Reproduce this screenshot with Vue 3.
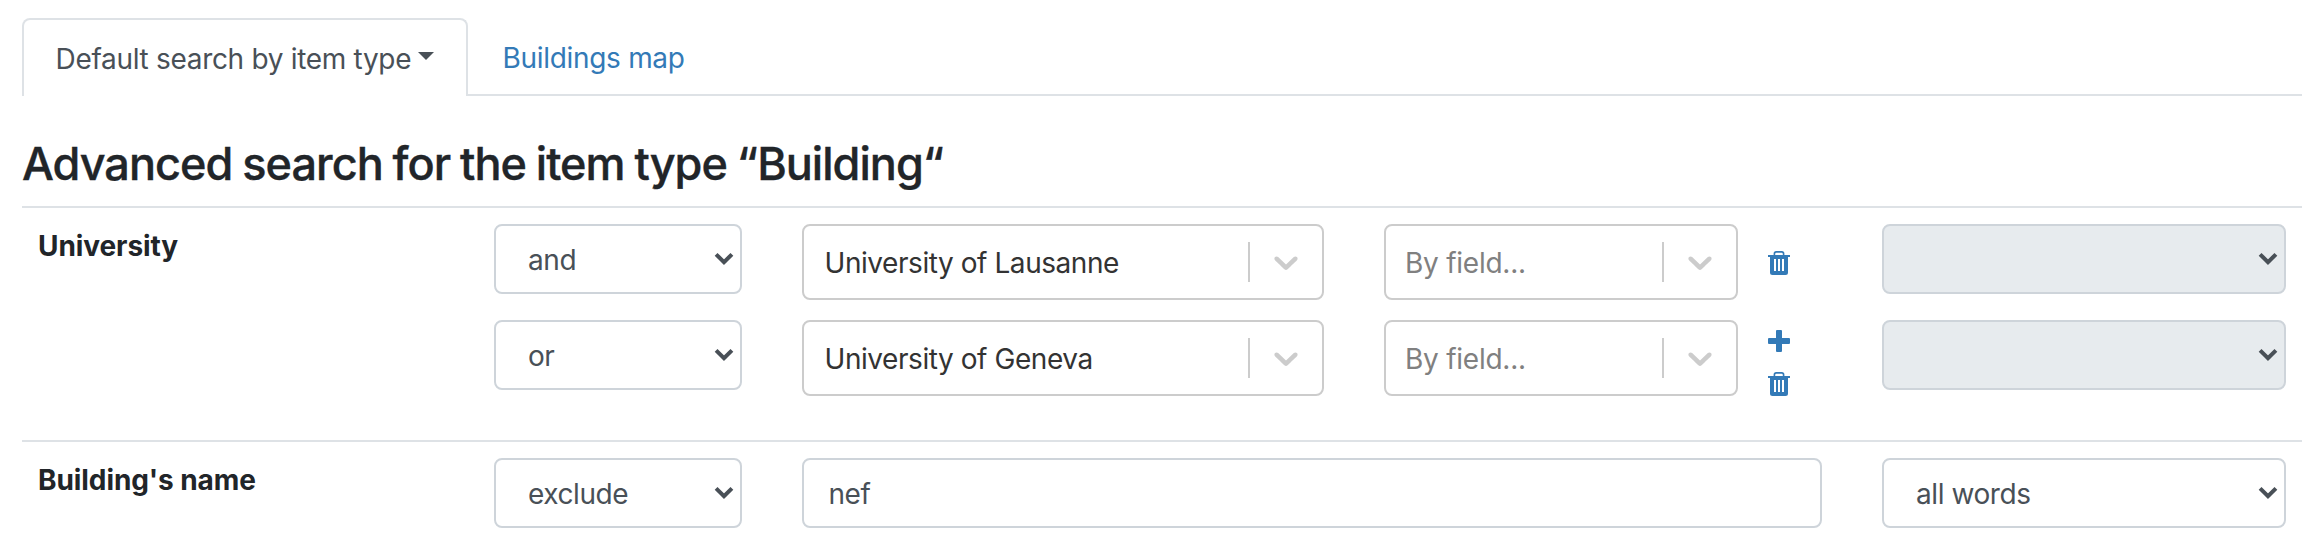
<script setup>
const entries = [
  { operator: 'and', value: 'University of Lausanne', placeholder: 'By field...', canAdd: false },
  { operator: 'or', value: 'University of Geneva', placeholder: 'By field...', canAdd: true },
]
</script>

<template>
  <main class="page">
    <nav class="tabs">
      <a class="tab active">Default search by item type<span class="caret"></span></a>
      <a class="tab link">Buildings map</a>
      <span class="rest"></span>
    </nav>

    <h2 class="title">Advanced search for the item type “Building“</h2>

    <section class="row university">
      <div class="label">University</div>
      <div class="entries">
        <div v-for="entry in entries" :key="entry.operator" class="entry">
          <div class="select">
            <span>{{ entry.operator }}</span>
            <svg class="arrow" viewBox="0 0 20 14" width="20" height="14"><path d="M2.1 2.3 10 10.1 17.9 2.3" /></svg>
          </div>
          <div class="pickers">
            <div class="combo">
              <span class="value">{{ entry.value }}</span>
              <span class="separator"></span>
              <svg class="chevron" viewBox="0 0 20 20"><path d="M4.516 7.548c0.436-0.446 1.043-0.481 1.576 0l3.908 3.747 3.908-3.747c0.533-0.481 1.141-0.446 1.574 0 0.436 0.445 0.408 1.197 0 1.615-0.406 0.418-4.695 4.502-4.695 4.502-0.217 0.223-0.502 0.335-0.787 0.335s-0.57-0.112-0.789-0.335c0 0-4.287-4.084-4.695-4.502s-0.436-1.17 0-1.615z" /></svg>
            </div>
            <div class="combo field">
              <span class="placeholder">{{ entry.placeholder }}</span>
              <span class="separator"></span>
              <svg class="chevron" viewBox="0 0 20 20"><path d="M4.516 7.548c0.436-0.446 1.043-0.481 1.576 0l3.908 3.747 3.908-3.747c0.533-0.481 1.141-0.446 1.574 0 0.436 0.445 0.408 1.197 0 1.615-0.406 0.418-4.695 4.502-4.695 4.502-0.217 0.223-0.502 0.335-0.787 0.335s-0.57-0.112-0.789-0.335c0 0-4.287-4.084-4.695-4.502s-0.436-1.17 0-1.615z" /></svg>
            </div>
            <div class="actions">
              <svg v-if="entry.canAdd" class="icon plus" viewBox="0 0 22 22" width="22" height="22">
                <path d="M9 0h4a1 1 0 0 1 1 1v7h7a1 1 0 0 1 1 1v4a1 1 0 0 1-1 1h-7v7a1 1 0 0 1-1 1H9a1 1 0 0 1-1-1v-7H1a1 1 0 0 1-1-1V9a1 1 0 0 1 1-1h7V1a1 1 0 0 1 1-1z" />
              </svg>
              <svg class="icon" viewBox="0 0 22 24" width="22" height="24">
                <path fill-rule="evenodd" d="M0 4h5.6V2.6A2.6 2.6 0 0 1 8.2 0h5.6a2.6 2.6 0 0 1 2.6 2.6V4H22v2h-2v15.5a2.5 2.5 0 0 1-2.5 2.5h-13A2.5 2.5 0 0 1 2 21.5V6H0zM7.2 4h7.6V3a1.2 1.2 0 0 0-1.2-1.2H8.4A1.2 1.2 0 0 0 7.2 3zM6 8v12h2V8zM10 8v12h2V8zM14 8v12h2V8z" />
              </svg>
            </div>
          </div>
          <div class="select disabled">
            <svg class="arrow" viewBox="0 0 20 14" width="20" height="14"><path d="M2.1 2.3 10 10.1 17.9 2.3" /></svg>
          </div>
        </div>
      </div>
    </section>

    <section class="row">
      <div class="label">Building's name</div>
      <div class="entries">
        <div class="entry">
          <div class="select">
            <span>exclude</span>
            <svg class="arrow" viewBox="0 0 20 14" width="20" height="14"><path d="M2.1 2.3 10 10.1 17.9 2.3" /></svg>
          </div>
          <div class="input">nef</div>
          <div class="select">
            <span>all words</span>
            <svg class="arrow" viewBox="0 0 20 14" width="20" height="14"><path d="M2.1 2.3 10 10.1 17.9 2.3" /></svg>
          </div>
        </div>
      </div>
    </section>
  </main>
</template>

<style>
body {
  background: #fff;
}
</style>

<style scoped>
.page,
.page * {
  box-sizing: border-box;
}
.page {
  width: 2320px;
  height: 560px;
  padding: 18px 18px 0 22px;
  font-family: Inter, 'Liberation Sans', sans-serif;
  font-size: 28px;
  color: #212529;
  overflow: hidden;
  white-space: nowrap;
}
.tabs {
  display: flex;
  height: 78px;
}
.tab {
  display: flex;
  align-items: center;
  letter-spacing: -0.31px;
}
.active {
  width: 446px;
  padding: 1px 0 0 31.5px;
  border: 2px solid #dee2e6;
  border-bottom: 0;
  border-radius: 8px 8px 0 0;
  color: #495057;
}
.caret {
  margin: -5px 0 0 6.5px;
  border: 8.5px solid transparent;
  border-top-color: currentColor;
  border-bottom: 0;
}
.link {
  width: 250px;
  padding: 4px 0 0 34.5px;
  border-bottom: 2px solid #dee2e6;
  color: #337ab7;
}
.rest {
  flex: 1;
  border-bottom: 2px solid #dee2e6;
}
.title {
  margin: 41px 0 15px;
  font-size: 45px;
  line-height: 54px;
  font-weight: 500;
  letter-spacing: -0.96px;
  word-spacing: -1.2px;
  -webkit-text-stroke: 0.4px currentColor;
}
.row {
  display: grid;
  grid-template-columns: 456px 1fr;
  padding: 16px 16px 0;
  border-top: 2px solid #dee2e6;
}
.university {
  padding-bottom: 44px;
}
.label {
  padding-top: 1px;
  font-weight: 700;
  line-height: 43px;
  letter-spacing: -0.08px;
}
.entries {
  display: grid;
  gap: 20px;
}
.entry {
  display: grid;
  grid-template-columns: 248px 1020px 404px;
  gap: 60px;
  align-items: start;
}
.select,
.input {
  display: flex;
  align-items: center;
  height: 70px;
  padding: 1px 6px 0 32px;
  border: 2px solid #ced4da;
  border-radius: 8px;
  background: #fff;
  color: #495057;
  letter-spacing: -0.42px;
}
.input {
  padding-left: 24.5px;
}
.select.disabled {
  background: #e7ebee;
}
.arrow {
  margin: -2px 0 0 auto;
  fill: none;
  stroke: #495057;
  stroke-width: 4;
}
.pickers {
  display: grid;
  grid-template-columns: 522px 354px 22px;
  column-gap: 60px;
}
.combo {
  display: flex;
  align-items: center;
  height: 76px;
  padding: 0 16px 0 20.5px;
  border: 2px solid #ccc;
  border-radius: 8px;
  background: #fff;
  color: #333;
  letter-spacing: -0.44px;
}
.field {
  padding-left: 19px;
}
.value,
.placeholder {
  padding-top: 2px;
}
.placeholder {
  color: #808080;
  letter-spacing: -0.25px;
}
.separator {
  width: 2px;
  height: 40px;
  margin: 0 16px 0 auto;
  background: #ccc;
}
.chevron {
  width: 40px;
  height: 40px;
  fill: #ccc;
}
.actions {
  display: flex;
  flex-direction: column;
  justify-content: center;
  gap: 20px;
  height: 76px;
  margin-left: -30px;
  padding-top: 2px;
}
.plus {
  margin-top: 8px;
}
.icon {
  display: block;
  width: 22px;
  flex: none;
  fill: #337ab7;
}
</style>
